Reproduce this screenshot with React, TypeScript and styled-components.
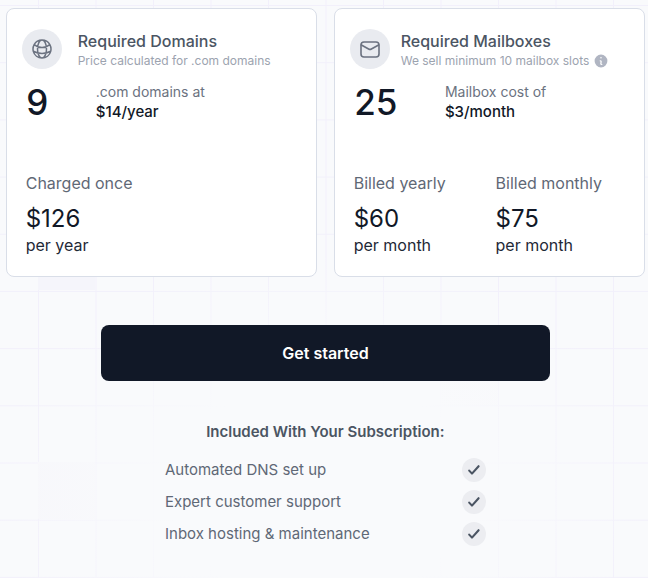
import React from "react";
import styled, { createGlobalStyle } from "styled-components";
import { HiOutlineGlobeAlt, HiMiniInformationCircle } from "react-icons/hi2";

const Global = createGlobalStyle`
  html, body { margin: 0; padding: 0; background: #fff; }
  body { font-family: Inter, "Liberation Sans", sans-serif; }
`;

const gridLine = "#f2f0fb";
const bg = "#f9fafc";

const Page = styled.div`
  width: 648px;
  height: 578px;
  box-sizing: border-box;
  padding: 8.2px 0 0 5.7px;
  overflow: hidden;
  background-color: ${bg};
  background-image:
    radial-gradient(ellipse 330px 240px at 320px 490px, ${bg} 45%, rgba(249, 250, 252, 0) 100%),
    linear-gradient(#f5f5fb, #f5f5fb),
    linear-gradient(#f7f7fb, #f7f7fb),
    linear-gradient(#f8f8fb, #f8f8fb),
    linear-gradient(to right, ${gridLine} 1px, transparent 1px),
    linear-gradient(to bottom, ${gridLine} 1px, transparent 1px);
  background-size: 100% 100%, 57px 14px, 57px 57px, 57px 57px, 57.5px 57.2px, 57.5px 57.2px;
  background-position: 0 0, 38px 276px, 38px 462px, 441px 348px, 38px 5px, 38px 5px;
  background-repeat: no-repeat, no-repeat, no-repeat, no-repeat, repeat, repeat;
`;

const Cards = styled.div`
  display: grid;
  grid-template-columns: 311.8px 311.8px;
  gap: 16.2px;
`;

const Card = styled.section`
  box-sizing: border-box;
  height: 268.4px;
  padding: 20px 15px;
  background: #fff;
  border: 1px solid #d9dee8;
  border-radius: 8px;
`;

const Header = styled.div`
  display: flex;
  align-items: center;
  gap: 16px;
`;

const IconCircle = styled.div`
  flex: none;
  display: flex;
  align-items: center;
  justify-content: center;
  width: 40px;
  height: 40px;
  border-radius: 50%;
  background: #e9ebf0;
  color: #6b7280;
  font-size: 24px;
`;

const Heading = styled.div<{ $shift?: number }>`
  display: flex;
  flex-direction: column;
  margin-left: ${(p) => p.$shift ?? 0}px;
`;

const Title = styled.h3`
  margin: 0;
  font-size: 16px;
  line-height: 24px;
  font-weight: 500;
  color: #4b5563;
`;

const Subtitle = styled.p`
  display: flex;
  align-items: center;
  gap: 4px;
  margin: 0;
  font-size: 12px;
  line-height: 16px;
  color: #9ca3af;
`;

const InfoIcon = styled(HiMiniInformationCircle)`
  width: 16px;
  height: 16px;
  color: #b0b5c2;
`;

const Body = styled.div`
  padding: 0 4px;
`;

const Stats = styled.div`
  display: flex;
  gap: 47.5px;
  margin-top: 8px;
`;

const Count = styled.div`
  margin-left: 0.5px;
  font-size: 35px;
  line-height: 50px;
  font-weight: 500;
  color: #111827;
`;

const Rate = styled.div`
  font-size: 14px;
  line-height: 20px;
  color: #6b7280;
  padding-top: 5px;
`;

const RateValue = styled.div`
  font-size: 15px;
  line-height: 19px;
  font-weight: 500;
  color: #111827;
`;

const Prices = styled.div`
  display: grid;
  grid-template-columns: 1fr 1fr;
  gap: 12px;
  margin-top: 44px;
`;

const PriceLabel = styled.div`
  font-size: 16px;
  line-height: 24px;
  color: #5f6876;
`;

const Amount = styled.div`
  margin-top: 8.5px;
  font-size: 24px;
  line-height: 29px;
  color: #111827;
`;

const Period = styled.div`
  font-size: 16px;
  line-height: 24px;
  color: #1f2937;
`;

const Cta = styled.button`
  display: block;
  width: 448.4px;
  height: 56px;
  margin: 48.4px 0 0 95.6px;
  border: 0;
  border-radius: 8px;
  background: #111827;
  color: #fff;
  font: 600 16px/24px Inter, "Liberation Sans", sans-serif;
`;

const Included = styled.div`
  width: 320.7px;
  margin: 38.7px 0 0 159.3px;
`;

const IncludedTitle = styled.h4`
  margin: 0 0 10px;
  font-size: 15px;
  line-height: 24px;
  font-weight: 600;
  color: #4b5563;
  text-align: center;
`;

const Feature = styled.div`
  display: flex;
  align-items: center;
  justify-content: space-between;
  height: 32px;
  font-size: 15px;
  color: #5f6876;
`;

const FeatureText = styled.span`
  margin-top: -1px;
`;

const Tick = styled.span`
  display: flex;
  align-items: center;
  justify-content: center;
  width: 24px;
  height: 24px;
  border-radius: 50%;
  background: #ecedf1;
`;

const Check = () => (
  <svg width="14" height="14" viewBox="0 0 14 14" fill="none" stroke="#4b5563" strokeWidth="2.1" strokeLinecap="round" strokeLinejoin="round">
    <path d="M2.2 7.6 5 10.6 11.6 3.2" />
  </svg>
);

const Envelope = () => (
  <svg width="20" height="17" viewBox="0 0 20 17" fill="none" stroke="currentColor" strokeWidth="1.6" strokeLinecap="round" strokeLinejoin="round">
    <rect x="1" y="1" width="18" height="15" rx="3" />
    <path d="M1.4 4 8.6 8a2.8 2.8 0 0 0 2.8 0L18.6 4" />
  </svg>
);

const features = ["Automated DNS set up", "Expert customer support", "Inbox hosting & maintenance"];

export default function App() {
  return (
    <Page>
      <Global />
      <Cards>
        <Card>
          <Header>
            <IconCircle><HiOutlineGlobeAlt /></IconCircle>
            <Heading>
              <Title>Required Domains</Title>
              <Subtitle>Price calculated for .com domains</Subtitle>
            </Heading>
          </Header>
          <Body>
            <Stats>
              <Count>9</Count>
              <Rate>.com domains at<RateValue>$14/year</RateValue></Rate>
            </Stats>
            <Prices>
              <div>
                <PriceLabel>Charged once</PriceLabel>
                <Amount>$126</Amount>
                <Period>per year</Period>
              </div>
            </Prices>
          </Body>
        </Card>
        <Card>
          <Header>
            <IconCircle><Envelope /></IconCircle>
            <Heading $shift={-5}>
              <Title>Required Mailboxes</Title>
              <Subtitle>We sell minimum 10 mailbox slots <InfoIcon /></Subtitle>
            </Heading>
          </Header>
          <Body>
            <Stats>
              <Count>25</Count>
              <Rate>Mailbox cost of<RateValue>$3/month</RateValue></Rate>
            </Stats>
            <Prices>
              <div>
                <PriceLabel>Billed yearly</PriceLabel>
                <Amount>$60</Amount>
                <Period>per month</Period>
              </div>
              <div>
                <PriceLabel>Billed monthly</PriceLabel>
                <Amount>$75</Amount>
                <Period>per month</Period>
              </div>
            </Prices>
          </Body>
        </Card>
      </Cards>
      <Cta>Get started</Cta>
      <Included>
        <IncludedTitle>Included With Your Subscription:</IncludedTitle>
        {features.map((f) => (
          <Feature key={f}><FeatureText>{f}</FeatureText><Tick><Check /></Tick></Feature>
        ))}
      </Included>
    </Page>
  );
}
